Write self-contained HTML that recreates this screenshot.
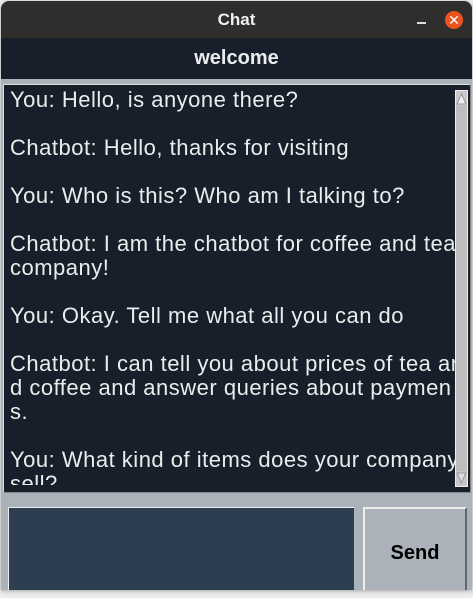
<!DOCTYPE html>
<html><head><style>
*{margin:0;padding:0;box-sizing:border-box}
body{width:473px;height:598px;background:#ececec;position:relative;overflow:hidden;font-family:"Liberation Sans",sans-serif}
.win{position:absolute;left:1px;top:1px;width:471px;height:589px;background:#abb2b9;border-radius:8px 8px 0 0;overflow:hidden;box-shadow:0 1px 4px rgba(0,0,0,.3)}
.title{position:absolute;left:0;top:0;width:471px;height:37px;background:#302d2d;color:#f0f0f0;font-weight:bold;font-size:17px;text-align:center;line-height:37px}
.min{position:absolute;left:416px;top:21px;width:9px;height:1.5px;background:#ddd}
.close{position:absolute;left:444px;top:10px;width:18px;height:18px;border-radius:50%;background:#e95420;color:#fff;font-size:14px;line-height:18px;text-align:center}
.welcome{position:absolute;left:0;top:37px;width:471px;height:41px;background:#17202a;color:#eaecee;font-weight:bold;font-size:20px;text-align:center;line-height:41px}
.ta{position:absolute;left:2px;top:83px;width:468px;height:409px;background:#17202a;border:1px solid #ddd;border-right-color:#888;border-bottom-color:#888;overflow:hidden}
.txt{position:absolute;left:6px;top:3px;width:452px;height:397px;color:#eaecee;font-size:22px;letter-spacing:0.5px;line-height:24px;white-space:pre;overflow:hidden}
.sb{position:absolute;left:451px;top:5px;width:13px;height:397px;background:#bdbdbd;border:1px solid #eee}
.up,.dn{position:absolute;left:0;width:11px;height:15px;background:#c8c8c8}
.up{top:0}.dn{bottom:0}
.entry{position:absolute;left:7px;top:506px;width:346px;height:84px;background:#2c3e50;border:1px solid #eee;border-right:none;border-bottom:none}
.btn{position:absolute;left:362px;top:506px;width:104px;height:84px;background:#abb2b9;border:2px solid #eee;border-right-color:#666;border-bottom:none;font-weight:bold;font-size:20px;color:#000;text-align:center;line-height:88px}
</style></head><body>
<div class="win">
<div class="title">Chat</div><div class="min"></div><div class="close">✕</div>
<div class="welcome">welcome</div>
<div class="ta"><div class="txt">You: Hello, is anyone there?

Chatbot: Hello, thanks for visiting

You: Who is this? Who am I talking to?

Chatbot: I am the chatbot for coffee and tea
company!

You: Okay. Tell me what all you can do

Chatbot: I can tell you about prices of tea an
d coffee and answer queries about paymen
s.

You: What kind of items does your company
sell?</div>
<div class="sb"><div class="up"><svg width="11" height="15"><path d="M1 13 L5.5 3 L10 13Z" fill="#eee" stroke="#999"/></svg></div><div class="dn"><svg width="11" height="15"><path d="M1 2 L5.5 12 L10 2Z" fill="#ddd" stroke="#999"/></svg></div></div>
</div>
<div class="entry"></div>
<div class="btn">Send</div>
</div>
</body></html>
